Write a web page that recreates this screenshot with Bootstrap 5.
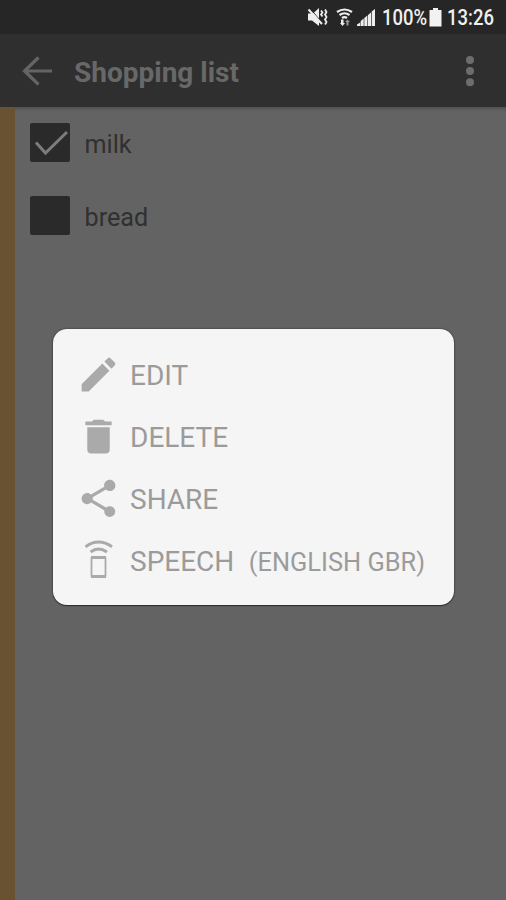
<!DOCTYPE html>
<html lang="en">
<head>
<meta charset="utf-8">
<meta name="viewport" content="width=device-width, initial-scale=1">
<title>Shopping list</title>
<link href="https://cdn.jsdelivr.net/npm/bootstrap@5.3.0/dist/css/bootstrap.min.css" rel="stylesheet">
<style>
body{font-family:Roboto,"Liberation Sans",sans-serif;background:#636363;height:900px;overflow:hidden}
svg{display:block;flex:none}
.statusbar{height:34px;background:#262626;color:#f0f0f0;padding-right:12px;font-size:21.5px;line-height:34px;font-weight:500}
.statusbar span{display:block;white-space:nowrap;transform-origin:0 50%;transform:scaleX(.86);padding-top:2px}
.pct{width:47px;margin-left:6px}
.clock{width:47px;margin-left:5px}
.appbar{height:73px;background:#2f2f2f;color:#686868;padding:0 29px 0 22px}
.appbar h1{font-size:28px;font-weight:700;line-height:32px;margin-left:22px;padding-top:4px}
.content-area{height:793px;box-shadow:inset 0 4px 3px -2px #505050}
.stripe{width:15px;background:#685231}
.entries{padding-left:15px}
.entry{height:73px;color:#303030;font-size:25.2px;line-height:30px;padding-bottom:2px}
.entry-label{padding-top:4px}
.tick{width:39.500px;height:39px;background:#2a2a2a;border-radius:2px;margin-right:15px}
.sheet{left:53px;top:329px;width:401px;height:276px;background:#f5f5f5;border-radius:14px;box-shadow:0 0 2px #222,0 1px 1px #333;padding:14px 0 0 23px;color:#9b9b9b}
.option{height:62px;font-size:28px;line-height:34px;font-weight:400;white-space:nowrap}
.option>div{padding-top:4px}
.option svg{margin-right:9px;fill:#aaa}
.option .locale{font-size:25.4px;margin-left:14.500px}
</style>
</head>
<body>
<header>
  <div class="statusbar d-flex justify-content-end align-items-center">
    <svg width="76" height="34" viewBox="0 0 76 34" fill="#eee">
      <path d="M8 13.500h5l6-5.500v18l-7-5.500H8z"/>
      <path d="M10.500 9L22 22.500" stroke="#262626" stroke-width="1"/>
      <path d="M8.500 9.500L22 24" stroke="#eee" stroke-width="2"/>
      <path d="M21 10.500l1.500 2-1.500 2 1.500 2M25 9.500l1.500 2.500-1.500 2.500 1.500 2.500-1.500 2.500 1.500 2.500-1.500 2.500" fill="none" stroke="#eee" stroke-width="1.800"/>
      <path d="M37 12q7.500-5 15 0M39.500 15q5-3.500 10 0M42 18q2.500-1.800 5 0" fill="none" stroke="#eee" stroke-width="2.200"/>
      <path d="M41 19.500h2.500v3.500H45l-2.500 3-2.500-3h1z"/>
      <path d="M46.500 25.500V22H45l2.500-2.500L50 22h-1.500v3.500z" fill="#999"/>
      <path d="M57 26v-1.500l3.200-2V26zM60.700 26v-5l3-2.500V26zM64.300 26v-8l3.100-2.500V26zM68 26V15l3-2.500V26zM71.700 26V11.500L75 9v17z"/>
    </svg>
    <span class="pct">100%</span>
    <svg width="13" height="34" viewBox="0 0 13 34"><path fill="#f2f2f2" d="M4 8h5v2h3.500v16.500H.5V10H4z"/></svg>
    <span class="clock">13:26</span>
  </div>
  <nav class="appbar d-flex align-items-center">
    <svg width="30" height="30" viewBox="0 0 30 30" fill="none" stroke="#646464" stroke-width="3.200"><path d="M30 15H2.500M16.500 1.500L2.500 15l14 13.500"/></svg>
    <h1 class="mb-0">Shopping list</h1>
    <svg class="ms-auto" width="14" height="32" viewBox="0 0 14 32" fill="#6d6d6d"><circle cx="7" cy="5" r="4"/><circle cx="7" cy="16" r="4"/><circle cx="7" cy="27.300" r="4"/></svg>
  </nav>
</header>
<main class="content-area d-flex">
  <div class="stripe"></div>
  <div class="entries flex-grow-1">
    <div class="entry d-flex align-items-center">
      <div class="tick"><svg width="39" height="39" viewBox="0 0 39 39"><path d="M6 19.500L15.500 30 37 9" fill="none" stroke="#7c7c7c" stroke-width="3"/></svg></div>
      <div class="entry-label">milk</div>
    </div>
    <div class="entry d-flex align-items-center">
      <div class="tick"></div>
      <div class="entry-label">bread</div>
    </div>
  </div>
</main>
<div class="sheet position-absolute">
  <div class="option d-flex align-items-center">
    <svg width="45" height="45" viewBox="0 0 24 24"><path d="M3 17.250V21h3.750L17.810 9.940l-3.750-3.750L3 17.250zM20.710 7.040a1 1 0 0 0 0-1.410l-2.340-2.340a1 1 0 0 0-1.410 0l-1.830 1.830 3.750 3.750 1.830-1.830z"/></svg>
    <div>EDIT</div>
  </div>
  <div class="option d-flex align-items-center">
    <svg width="45" height="45" viewBox="0 0 24 24"><path d="M6 19c0 1.100.9 2 2 2h8c1.100 0 2-.9 2-2V7H6v12zM19 4h-3.500l-1-1h-5l-1 1H5v2h14V4z"/></svg>
    <div>DELETE</div>
  </div>
  <div class="option d-flex align-items-center">
    <svg width="45" height="45" viewBox="0 0 24 24"><path d="M18 16.080c-.76 0-1.440.3-1.960.77L8.910 12.700c.05-.23.09-.46.09-.7s-.04-.47-.09-.7l7.050-4.110c.54.5 1.250.81 2.040.81 1.660 0 3-1.340 3-3s-1.340-3-3-3-3 1.340-3 3c0 .24.04.47.09.7L8.040 9.810C7.500 9.310 6.790 9 6 9c-1.660 0-3 1.340-3 3s1.340 3 3 3c.79 0 1.500-.31 2.040-.81l7.120 4.160c-.05.21-.08.43-.08.65 0 1.610 1.310 2.920 2.920 2.920s2.920-1.310 2.920-2.920-1.310-2.920-2.920-2.920z"/></svg>
    <div>SHARE</div>
  </div>
  <div class="option d-flex align-items-center">
    <svg width="45" height="45" viewBox="0 0 45 45"><g fill="none" stroke="#aaa"><path d="M9.500 8.800q13-9.500 26.500 0M14.500 14q8-6 16.500 0" stroke-width="2.900"/><rect x="15.500" y="19" width="14" height="20" rx="1" stroke-width="1.800"/><path d="M15 19.500h15M15 38.500h15" stroke-width="3"/></g></svg>
    <div>SPEECH</div><div class="locale">(ENGLISH GBR)</div>
  </div>
</div>
<script src="https://cdn.jsdelivr.net/npm/bootstrap@5.3.0/dist/js/bootstrap.bundle.min.js"></script>
</body>
</html>
